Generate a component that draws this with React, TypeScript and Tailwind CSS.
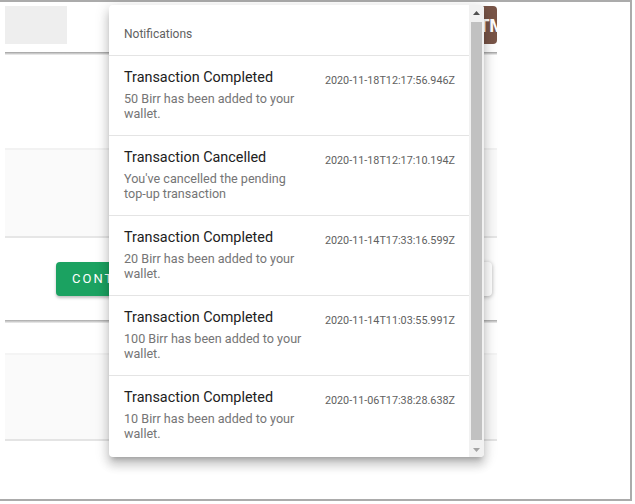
import React from "react";

const notifications = [
  {
    title: "Transaction Completed",
    body: "50 Birr has been added to your wallet.",
    time: "2020-11-18T12:17:56.946Z",
  },
  {
    title: "Transaction Cancelled",
    body: "You've cancelled the pending top-up transaction",
    time: "2020-11-18T12:17:10.194Z",
  },
  {
    title: "Transaction Completed",
    body: "20 Birr has been added to your wallet.",
    time: "2020-11-14T17:33:16.599Z",
  },
  {
    title: "Transaction Completed",
    body: "100 Birr has been added to your wallet.",
    time: "2020-11-14T11:03:55.991Z",
  },
  {
    title: "Transaction Completed",
    body: "10 Birr has been added to your wallet.",
    time: "2020-11-06T17:38:28.638Z",
  },
];

function Scrollbar() {
  return (
    <div className="flex w-[15px] flex-col bg-[#f1f1f1]">
      <div className="flex h-[15px] items-center justify-center">
        <svg width="7" height="4" viewBox="0 0 7 4">
          <path d="M0 4 L3.5 0 L7 4 Z" fill="#505050" />
        </svg>
      </div>
      {/* thumb */}
      <div className="mx-[2px] mt-[2px] flex-1 bg-[#c1c1c1]" />
      <div className="mt-[2px] flex h-[15px] items-center justify-center">
        <svg width="7" height="4" viewBox="0 0 7 4">
          <path d="M0 0 L7 0 L3.5 4 Z" fill="#a3a3a3" />
        </svg>
      </div>
    </div>
  );
}

export default function App() {
  return (
    <div className="relative h-[504px] w-[635px] overflow-hidden bg-white font-['Roboto',sans-serif]">
      {/* browser frame */}
      <div className="h-[501px] w-[632px] border-y-2 border-r-2 border-[#ababab]">
        {/* page behind the menu */}
        <div className="ml-[5px] w-[492px] overflow-hidden">
          <div className="flex h-[50px] items-start justify-between pt-[4px]">
            <div className="h-[38px] w-[62px] bg-[#eeeeee]" />
            <div className="flex h-[38px] w-[32px] items-center overflow-hidden whitespace-nowrap rounded-[4px] bg-[#795548] text-[18px] font-bold tracking-tight text-white">
              <span className="ml-[3px]">ATM</span>
            </div>
          </div>
          <div className="h-[3px] bg-gradient-to-b from-[#9e9e9e] to-[#f5f5f5]" />
          <div className="mt-[93px] h-[90px] border-y-2 border-t-[#f2f2f2] border-b-[#e6e6e6] bg-[#fafafa]" />
          <div className="flex h-[82px] items-center justify-between pl-[51px] pr-[5px]">
            <div className="flex h-[34px] w-[60px] items-center overflow-hidden whitespace-nowrap rounded-[4px] bg-[#1ba261] pl-[16px] text-[13px] font-normal tracking-[2px] text-white shadow-[0_2px_3px_rgba(0,0,0,0.25)]">
              CONTINUE
            </div>
            <div className="h-[34px] w-[100px] rounded-[4px] bg-white shadow-[0_1px_4px_rgba(0,0,0,0.3)]" />
          </div>
          <div className="h-[3px] bg-gradient-to-b from-[#a8a8a8] to-[#f0f0f0]" />
          <div className="mt-[30px] h-[88px] border-y-2 border-t-[#f4f4f4] border-b-[#e4e4e4] bg-[#fafafa]" />
        </div>
      </div>

      {/* notifications menu */}
      <div className="absolute left-[109px] top-[5px] flex h-[452px] w-[375px] overflow-hidden rounded-[4px] bg-white shadow-[0_5px_5px_-3px_rgba(0,0,0,0.2),0_8px_10px_1px_rgba(0,0,0,0.14),0_3px_14px_2px_rgba(0,0,0,0.12)]">
        <div className="flex-1">
          <div className="h-[51px] border-b border-[#e4e4e4] pl-[15px] pt-[21px] text-[12px] leading-[16px] text-[#616161]">
            Notifications
          </div>
          {notifications.map((n, i) => (
            <div
              key={i}
              className={
                "flex h-[80px] justify-between pl-[15px] pr-[14px] pt-[12px] " +
                (i < notifications.length - 1 ? "border-b border-[#e4e4e4]" : "")
              }
            >
              <div className="w-[182px]">
                <div className="text-[14.4px] leading-[20px] text-[#212121]">{n.title}</div>
                <div className="mt-[3px] text-[12.6px] leading-[15px] text-[#757575]">{n.body}</div>
              </div>
              <div className="mt-[6px] text-[10.8px] leading-[14px] text-[#616161]">{n.time}</div>
            </div>
          ))}
        </div>
        <Scrollbar />
      </div>
    </div>
  );
}
